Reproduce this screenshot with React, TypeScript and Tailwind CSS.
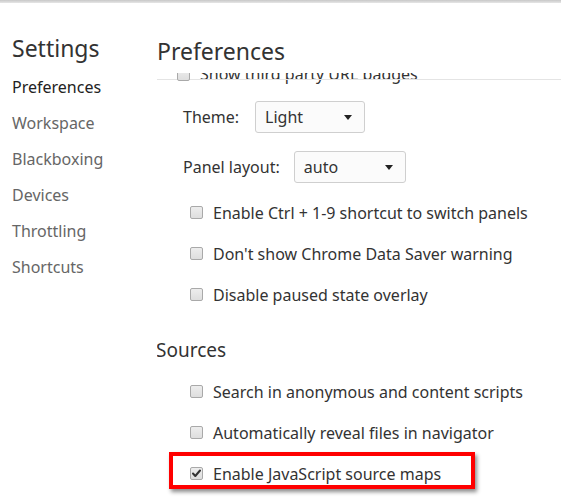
import React from "react";

const font = { fontFamily: '"Segoe UI", "Noto Sans", "Open Sans", sans-serif' };

function Checkbox({ checked }: { checked?: boolean }) {
  return (
    <span className="relative inline-block w-[13px] h-[13px] rounded-[2px] border border-[#a9a9a9] bg-gradient-to-b from-[#ededed] to-[#dedede] shrink-0">
      {checked && (
        <svg viewBox="0 0 13 13" className="absolute left-[-1px] top-[-1px] w-[13px] h-[13px]">
          <path d="M3 6.5 L5.3 9 L10 3.5" fill="none" stroke="#333" strokeWidth="2" strokeLinecap="round" strokeLinejoin="round" />
        </svg>
      )}
    </span>
  );
}

function Row({ label, checked }: { label: string; checked?: boolean }) {
  return (
    <div className="flex items-center h-[41px] pl-[33px] gap-[10px]">
      <Checkbox checked={checked} />
      <span>{label}</span>
    </div>
  );
}

function Select({ value, width }: { value: string; width: string }) {
  return (
    <div className={`flex items-center justify-between h-[32px] ${width} border border-[#cfcfcf] rounded-[3px] bg-[#fbfbfb] pl-[9px] pr-[12px]`}>
      <span>{value}</span>
      <svg width="8" height="5" viewBox="0 0 8 5"><path d="M0 0 H8 L4 5 Z" fill="#222" /></svg>
    </div>
  );
}

export default function App() {
  const side = ["Workspace", "Blackboxing", "Devices", "Throttling", "Shortcuts"];
  return (
    <div className="w-[561px] h-[502px] bg-white overflow-hidden text-[16px] text-[#333]" style={font}>
      <div className="h-[3px] bg-gradient-to-b from-[#c8c8c8] to-[#e6e6e6]" />
      <div className="flex">
        <div className="w-[145px] pl-[12px] shrink-0">
          <div className="text-[23px] leading-[30px] mt-[30px] text-[#333]">Settings</div>
          <div className="mt-[6px] leading-[36px] h-[36px] text-[#222]">Preferences</div>
          {side.map((s) => (
            <div key={s} className="leading-[36px] h-[36px] text-[#666]">{s}</div>
          ))}
        </div>
        <div className="flex-1 pl-[12px]">
          <div className="text-[23px] leading-[30px] mt-[33px] h-[37px] text-[#333]">Preferences</div>
          <div className="relative h-[430px] overflow-hidden">
            <div className="absolute left-[-2px] right-0 top-[6px] h-px bg-[#e4e4e4]" />
            <div className="-mt-[9px]">
              <div className="flex items-center h-[20px] pl-[20px] gap-[10px] text-[#333]">
                <Checkbox />
                <span>Show third party URL badges</span>
              </div>
              <div className="flex items-center h-[50px] pl-[26px] gap-[16px] mt-[8px]">
                <span>Theme:</span>
                <Select value="Light" width="w-[110px]" />
              </div>
              <div className="flex items-center h-[50px] pl-[26px] gap-[14px]">
                <span>Panel layout:</span>
                <Select value="auto" width="w-[112px]" />
              </div>
              <Row label="Enable Ctrl + 1-9 shortcut to switch panels" />
              <Row label="Don't show Chrome Data Saver warning" />
              <Row label="Disable paused state overlay" />
              <div className="text-[19px] h-[56px] flex items-end pb-[7px] -ml-[1px]">Sources</div>
              <Row label="Search in anonymous and content scripts" />
              <Row label="Automatically reveal files in navigator" />
              <div className="relative">
                <div className="absolute left-[12px] top-[-1px] w-[306px] h-[37px] border-[4px] border-[#ff0000] shadow-[2px_3px_4px_rgba(0,0,0,0.45)]" />
                <Row label="Enable JavaScript source maps" checked />
              </div>
            </div>
          </div>
        </div>
      </div>
    </div>
  );
}
